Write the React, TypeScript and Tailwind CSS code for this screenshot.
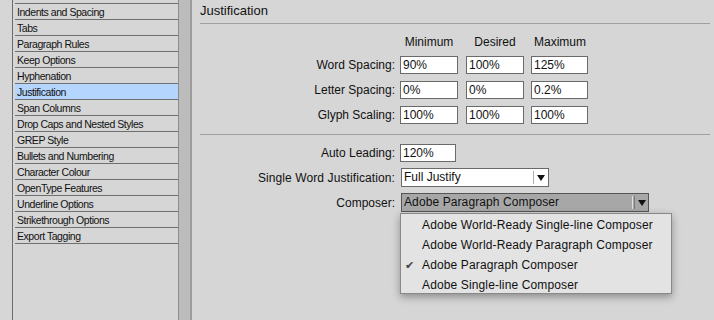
import React from "react";

const items = [
  "Indents and Spacing",
  "Tabs",
  "Paragraph Rules",
  "Keep Options",
  "Hyphenation",
  "Justification",
  "Span Columns",
  "Drop Caps and Nested Styles",
  "GREP Style",
  "Bullets and Numbering",
  "Character Colour",
  "OpenType Features",
  "Underline Options",
  "Strikethrough Options",
  "Export Tagging",
];

function Field({ v, w = "w-[58px]" }: { v: string; w?: string }) {
  return (
    <div className={`${w} h-[18px] bg-white border border-[#6a6a6a] pl-[2px] text-[12px] leading-[16px] text-[#111]`}>
      {v}
    </div>
  );
}

function Arrow() {
  return (
    <svg width="8" height="6" viewBox="0 0 8 6" className="block">
      <path d="M0 0 H8 L4 6 Z" fill="#111" />
    </svg>
  );
}

export default function App() {
  return (
    <div
      className="w-[714px] h-[320px] bg-[#d6d6d6] flex overflow-hidden text-[#111]"
      style={{ fontFamily: '"Liberation Sans", Arial, sans-serif' }}
    >
      {/* Left list */}
      <div className="pl-[12px] flex">
        <div className="w-[166px] h-full border-l border-[#6c6c6c] pt-[3px]">
          <div className="ml-[2px] border-t border-[#6f6f6f]" />
          {items.map((t) => (
            <div
              key={t}
              className={`ml-[2px] h-[16px] border-b border-[#6f6f6f] pl-[2px] text-[10.5px] tracking-[-0.45px] leading-[16px] ${
                t === "Justification" ? "bg-[#b4d5fd]" : ""
              }`}
            >
              {t}
            </div>
          ))}
        </div>
        <div className="w-[14px] h-full border-l border-[#8c8c8c] bg-[#bcbcbc] border-r-2 border-r-[#9c9c9c]" />
      </div>

      {/* Right panel */}
      <div className="flex-1 pl-[8px] pr-[4px]">
        <div className="h-[24px] border-b border-[#a0a0a0] text-[13px] leading-[24px] pt-[0px]">
          <span className="relative top-[-1px]">Justification</span>
        </div>

        <div className="flex mt-[10px] h-[16px] text-[12px] leading-[16px]">
          <div className="w-[200px]" />
          <div className="w-[58px] text-center">Minimum</div>
          <div className="w-[8px]" />
          <div className="w-[58px] text-center">Desired</div>
          <div className="w-[7px]" />
          <div className="w-[58px] text-center">Maximum</div>
        </div>

        <div className="mt-[6px] flex flex-col gap-[7px]">
          {[
            ["Word Spacing:", "90%", "100%", "125%"],
            ["Letter Spacing:", "0%", "0%", "0.2%"],
            ["Glyph Scaling:", "100%", "100%", "100%"],
          ].map(([l, a, b, c]) => (
            <div key={l} className="flex items-center h-[18px] text-[12px]">
              <div className="w-[195px] text-right pr-[0px]">{l}</div>
              <div className="w-[5px]" />
              <Field v={a} />
              <div className="w-[8px]" />
              <Field v={b} />
              <div className="w-[7px]" />
              <Field v={c} w="w-[57px]" />
            </div>
          ))}
        </div>

        <div className="mt-[10px] border-b border-[#a0a0a0]" />

        <div className="mt-[9px] flex flex-col gap-[6px] text-[12px]">
          <div className="flex items-center h-[18px]">
            <div className="w-[195px] text-right">Auto Leading:</div>
            <div className="w-[5px]" />
            <Field v="120%" w="w-[56px]" />
          </div>
          <div className="flex items-center h-[19px]">
            <div className="w-[195px] text-right tracking-[0.1px]">Single Word Justification:</div>
            <div className="w-[6px]" />
            <div className="w-[148px] h-[19px] bg-white border border-[#6a6a6a] flex items-center">
              <div className="flex-1 pl-[2px] leading-[17px]">Full Justify</div>
              <div className="w-[1px] h-[13px] bg-[#b0b0b0]" />
              <div className="w-[14px] flex justify-center">
                <Arrow />
              </div>
            </div>
          </div>
          <div className="flex items-center h-[19px] relative">
            <div className="w-[195px] text-right">Composer:</div>
            <div className="w-[6px]" />
            <div className="w-[248px] h-[19px] bg-[#a7a7a7] border border-[#555] flex items-center">
              <div className="flex-1 pl-[2px] leading-[17px] tracking-[0.1px]">Adobe Paragraph Composer</div>
              <div className="w-[1px] h-[13px] bg-[#e0e0e0]" />
              <div className="w-[1px] h-[13px] bg-[#7a7a7a] ml-[1px]" />
              <div className="w-[13px] flex justify-center">
                <Arrow />
              </div>
            </div>

            <div className="absolute left-[200px] top-[20px] w-[272px] h-[81px] bg-[#e3e3e3] border border-[#888] shadow-[0_3px_8px_rgba(0,0,0,0.35)] pt-[1px] z-10">
              {[
                "Adobe World-Ready Single-line Composer",
                "Adobe World-Ready Paragraph Composer",
                "Adobe Paragraph Composer",
                "Adobe Single-line Composer",
              ].map((t, i) => (
                <div key={t} className="h-[20px] flex items-center text-[12px] tracking-[0.13px]">
                  <div className="w-[21px] pl-[4px] text-[#444] text-[11px]">{i === 2 ? "✔" : ""}</div>
                  <div>{t}</div>
                </div>
              ))}
            </div>
          </div>
        </div>
      </div>
    </div>
  );
}
